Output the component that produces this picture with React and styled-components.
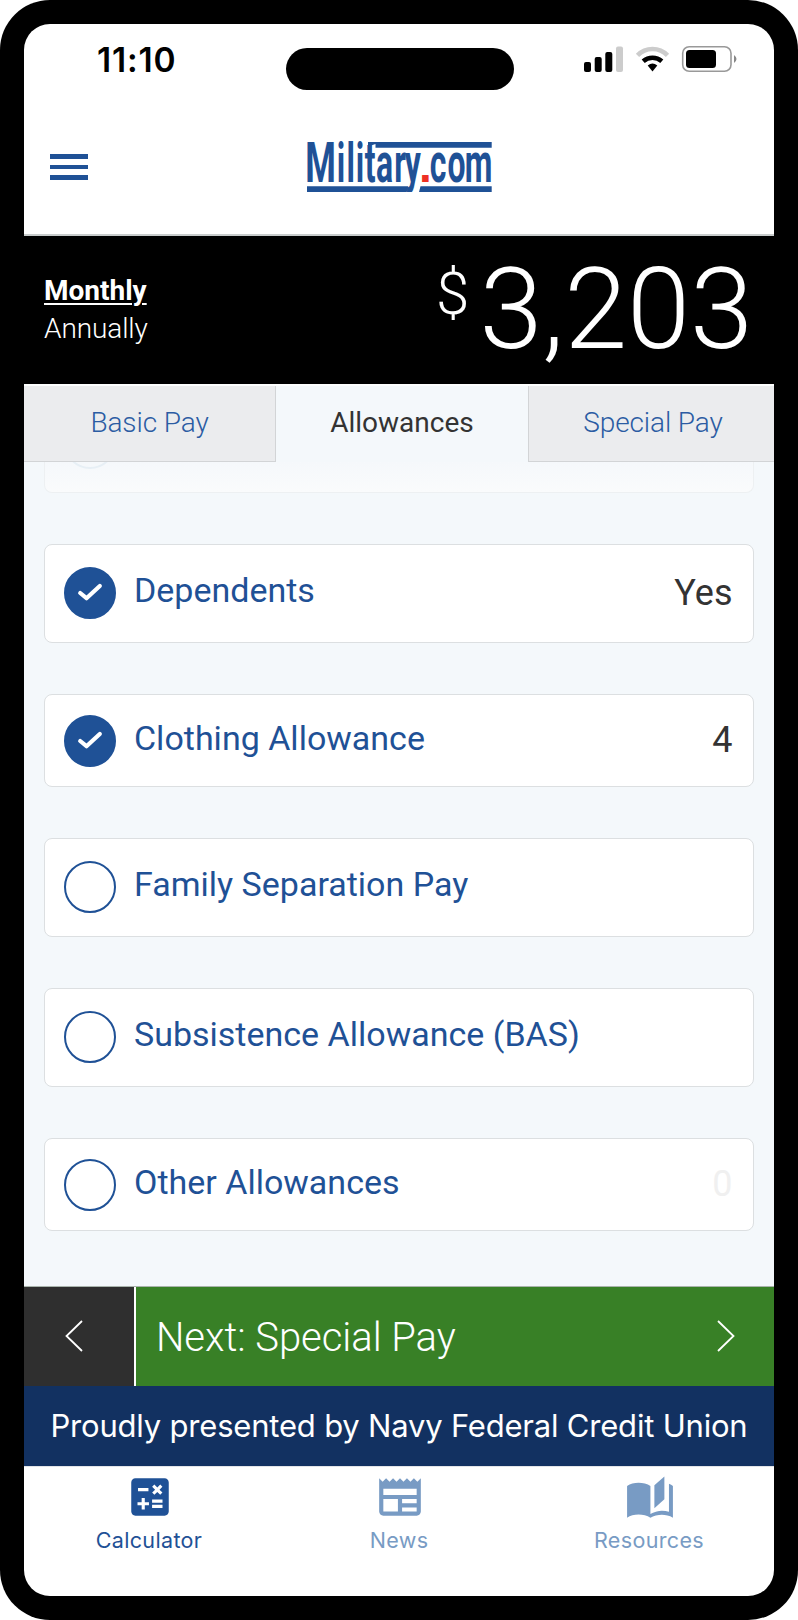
import styled, { createGlobalStyle } from 'styled-components'

const GlobalStyle = createGlobalStyle`
    * {
        box-sizing:border-box;
    }

    body {
        margin:0;
        background:white;
        font-family:Roboto,sans-serif;
    }

    button {
        margin:0;
        padding:0;
        border:0;
        background:none;
        font:inherit;
        text-align:left;
        white-space:nowrap;
    }
`

const Phone = styled.main`
    width:798px;
    height:1620px;
    padding:24px;
    border-radius:50px;
    background:black;
`

const Screen = styled.div`
    display:flex;
    flex-direction:column;
    height:100%;
    border-radius:26px;
    overflow:hidden;
    background:white;
`

const StatusBar = styled.div`
    display:grid;
    grid-template-columns:262px 228px 1fr;
    height:88px;
    padding-top:17px;
    align-items:start;
`

const Clock = styled.span`
    padding:1px 0 0 73px;
    font:600 33.5px/36px Inter,sans-serif;
    letter-spacing:.8px;
`

const Island = styled.div`
    height:42px;
    margin-top:7px;
    border-radius:21px;
    background:black;
`

const StatusIcons = styled.svg`
    width:156px;
    height:30px;
    margin:4px 0 0 69px;
`

const Header = styled.header`
    display:grid;
    grid-template-columns:1fr 190px 1fr;
    height:124px;
    border-bottom:2px solid #c8cccc;
    align-items:start;
`

const MenuButton = styled.button`
    display:flex;
    flex-direction:column;
    gap:6px;
    width:38px;
    margin:42px 0 0 26px;

    span {
        height:4.6px;
        background:#1f5196;
    }
`

const Logo = styled.svg`
    width:190px;
    height:60px;
    margin-top:26px;
    overflow:visible;
    fill:#1f5196;

    text {
        font-family:Roboto,sans-serif;
        font-size:56px;
        font-weight:700;
    }

    .dot {
        fill:#ee3124;
        font-family:'Liberation Sans',sans-serif;
        font-size:46px;
    }
`

const Summary = styled.section`
    display:flex;
    justify-content:space-between;
    height:148px;
    padding:0 21px 0 20px;
    background:black;
    color:white;
`

const Periods = styled.div`
    display:flex;
    flex-direction:column;
    padding-top:36px;
`

const Period = styled.button`
    height:38px;
    color:white;
    font-size:28px;
    line-height:38px;
    font-weight:${({ $active }) => $active ? 700 : 300};
    letter-spacing:${({ $active }) => $active ? 0 : '-.1px'};
    text-decoration:${({ $active }) => $active ? 'underline' : 'none'};
    text-decoration-thickness:2px;
    text-underline-offset:3px;
`

const Amount = styled.div`
    display:flex;
    gap:10px;
    font-weight:300;
    font-size:113.5px;
    line-height:148px;

    sup {
        padding-top:26px;
        font-size:60px;
        line-height:64px;
        vertical-align:baseline;
    }
`

const Tabs = styled.nav`
    display:grid;
    grid-template-columns:252px 252px 246px;
    height:78px;
    border-top:2px solid #fdfefe;
`

const Tab = styled.button`
    padding-bottom:${({ $active }) => $active ? 4 : 2}px;
    padding-left:${({ $edge }) => $edge === 'left' ? 3 : 0}px;
    border:0 solid #d2d4d6;
    border-width:${({ $active }) => $active ? 0 : '0 0 1px'};
    border-right-width:${({ $edge }) => $edge === 'right' ? '1px' : 0};
    border-left-width:${({ $edge }) => $edge === 'left' ? '1px' : 0};
    background:${({ $active }) => $active ? '#f4f8fb' : '#ebecee'};
    color:${({ $active }) => $active ? '#333' : '#2b5ca3'};
    font-size:28px;
    font-weight:${({ $active }) => $active ? 400 : 300};
    letter-spacing:${({ $active }) => $active ? 0 : '-.1px'};
    text-align:center;
`

const List = styled.section`
    flex:1;
    display:flex;
    flex-direction:column;
    gap:50.5px;
    padding:0 20px;
    background:#f4f8fb;
    overflow:hidden;
`

const FadedCard = styled.div`
    display:flex;
    align-items:flex-end;
    flex:none;
    height:31.3px;
    padding:0 0 23px 19px;
    border:1px solid #edf0f2;
    border-top:0;
    border-radius:0 0 8px 8px;
    background:linear-gradient(#f5f8fb,#fafbfc);
    overflow:hidden;

    span {
        flex:none;
        width:52px;
        height:52px;
        border:2px solid #e7eff5;
        border-radius:50%;
    }
`

const Card = styled.div`
    display:flex;
    align-items:flex-start;
    flex:none;
    height:${({ $tall }) => $tall ? 99.4 : 93.7}px;
    padding:${({ $tall }) => $tall ? 22.5 : 20}px 20.5px 0 19.2px;
    border:1px solid #dcdfe1;
    border-radius:8px;
    background:white;
    color:#1f5196;
    font-size:34px;
    line-height:46.6px;
`

const Check = styled.span`
    display:flex;
    align-items:center;
    justify-content:center;
    flex:none;
    width:52px;
    height:52px;
    margin-right:17.8px;
    border:2px solid #1f5196;
    border-radius:50%;
    background:${({ $checked }) => $checked ? '#1f5196' : 'white'};

    svg {
        margin-bottom:2px;
    }
`

const Value = styled.span`
    margin-left:auto;
    padding-top:2.6px;
    color:${({ $empty }) => $empty ? '#f0f0f0' : '#333'};
    font-size:36px;
`

const Actions = styled.div`
    display:flex;
    gap:2px;
    height:100px;
    border-top:1px solid #a9b4ac;
`

const Back = styled.button`
    display:flex;
    align-items:center;
    justify-content:center;
    width:110px;
    padding:0 10px 2px 0;
    background:#2f2f2f;
`

const Next = styled.button`
    flex:1;
    display:flex;
    align-items:center;
    justify-content:space-between;
    padding:0 38px 0 20px;
    background:#388026;
    color:white;
    font-size:40px;
    font-weight:300;
    line-height:48px;
    letter-spacing:-.05px;

    span {
        padding-top:2px;
    }

    svg {
        margin-bottom:2px;
    }
`

const Chevron = styled.svg`
    width:20px;
    height:34px;
    fill:none;
    stroke:white;
    stroke-width:1.8;
    transform:${({ $flip }) => $flip ? 'scaleX(-1)' : 'none'};
`

const Sponsor = styled.div`
    height:80px;
    background:#123161;
    color:white;
    font:400 31px/80px Inter,sans-serif;
    letter-spacing:-.2px;
    text-align:center;
    white-space:nowrap;
`

const BottomNav = styled.nav`
    display:grid;
    grid-template-columns:repeat(3,1fr);
    height:130px;
    border-top:1px solid #e2e4e8;
`

const NavItem = styled.button`
    display:flex;
    flex-direction:column;
    align-items:center;
    padding-top:5px;
    color:${({ $active }) => $active ? '#1f5196' : '#789bc4'};
    font:400 21.5px/28px Inter,sans-serif;
    letter-spacing:.35px;

    svg {
        width:50px;
        height:50px;
        margin:0 0 4px 1px;
        fill:currentColor;
    }
`

const allowances = [
    { label: 'Dependents', value: 'Yes', checked: true, tall: true },
    { label: 'Clothing Allowance', value: '4', checked: true },
    { label: 'Family Separation Pay', tall: true },
    { label: 'Subsistence Allowance (BAS)', tall: true },
    { label: 'Other Allowances', value: '0', empty: true },
]

function CheckMark() {
    return (
        <svg width='26' height='20' viewBox='0 0 26 20' fill='none' stroke='white' strokeWidth='4.2' strokeLinecap='round' strokeLinejoin='round'>
            <path d='M3.200 11 9.500 16.200 22.800 4' />
        </svg>
    )
}

function ChevronIcon({ flip }) {
    return (
        <Chevron $flip={flip} viewBox='0 0 20 34'>
            <path d='M2 2 17.500 17 2 32' />
        </Chevron>
    )
}

function Status() {
    return (
        <StatusBar>
            <Clock>11:10</Clock>
            <Island />
            <StatusIcons viewBox='0 0 156 30'>
                <rect x='1' y='17' width='7' height='10' rx='2' />
                <rect x='11.7' y='12' width='7' height='15' rx='2' />
                <rect x='22.3' y='7' width='7' height='20' rx='2' />
                <rect x='33' y='1.5' width='7' height='25.5' rx='2' fill='#ccc' />
                <path d='M54.500 10.300a21 21 0 0 1 30 0' fill='none' stroke='#ccc' strokeWidth='4.6' />
                <path d='M60.200 16.300a14 14 0 0 1 18.600 0' fill='none' stroke='black' strokeWidth='4.6' />
                <path d='M64.700 20.500q4.800-4 9.600 0L69.500 26.500Z' />
                <rect x='99.7' y='1.7' width='48.3' height='24.6' rx='6.5' fill='none' stroke='#999' strokeWidth='1.6' />
                <rect x='103' y='5' width='30' height='18' rx='3.5' />
                <path d='M151 10q5 4 0 8Z' fill='#888' />
            </StatusIcons>
        </StatusBar>
    )
}

// letters are squeezed horizontally, so each x is its place divided by the scale
const squeeze = 0.57
const at = (...places) => places.map((x) => x / squeeze).join(' ')

function MilitaryLogo() {
    return (
        <Logo viewBox='0 0 190 60' role='img' aria-label='Military.com'>
            <path d='M64 4H187.700V9.700H71.500V6L64 8.500Z' />
            <path d='M3 48.300H104.300L102.700 54H3ZM116.500 48.300H187.700V54H115Z' />
            <g transform={`scale(${squeeze} 1)`}>
                <text y='44'>
                    <tspan x={at(1.2)} textLength={at(30.6)} lengthAdjust='spacingAndGlyphs'>M</tspan>
                    <tspan x={at(32.8, 42.5, 51.8, 60.8, 72, 90.3, 100.8)}>ilitary</tspan>
                </text>
                <text x={at(125.8, 143.4, 160.8)} y='44'>com</text>
            </g>
            <text className='dot' x='115' y='44'>.</text>
            <path d='M98 54H118V58H98Z' fill='white' />
        </Logo>
    )
}

export default function App() {
    return (
        <>
            <GlobalStyle />
            <Phone>
                <Screen>
                    <Status />
                    <Header>
                        <MenuButton aria-label='Menu'>
                            <span />
                            <span />
                            <span />
                        </MenuButton>
                        <MilitaryLogo />
                    </Header>

                    <Summary>
                        <Periods>
                            <Period $active>Monthly</Period>
                            <Period>Annually</Period>
                        </Periods>
                        <Amount><sup>$</sup>3,203</Amount>
                    </Summary>

                    <Tabs>
                        <Tab $edge='right'>Basic Pay</Tab>
                        <Tab $active>Allowances</Tab>
                        <Tab $edge='left'>Special Pay</Tab>
                    </Tabs>

                    <List>
                        <FadedCard><span /></FadedCard>
                        {allowances.map(({ label, value, checked, tall, empty }) => (
                            <Card key={label} $tall={tall}>
                                <Check $checked={checked}>{checked && <CheckMark />}</Check>
                                {label}
                                {value && <Value $empty={empty}>{value}</Value>}
                            </Card>
                        ))}
                    </List>

                    <Actions>
                        <Back aria-label='Back'><ChevronIcon flip /></Back>
                        <Next><span>Next: Special Pay</span><ChevronIcon /></Next>
                    </Actions>
                    <Sponsor>Proudly presented by Navy Federal Credit Union</Sponsor>

                    <BottomNav>
                        <NavItem $active>
                            <svg viewBox='0 0 24 24'>
                                <path d='M19 3H5c-1.100 0-2 .900-2 2v14c0 1.100.900 2 2 2h14c1.100 0 2-.900 2-2V5c0-1.100-.900-2-2-2zm-5.970 4.060L14.090 6l1.410 1.410L16.910 6l1.060 1.060-1.410 1.410 1.410 1.410-1.060 1.060-1.410-1.400-1.410 1.410-1.060-1.060 1.410-1.410-1.410-1.420zm-6.780.660h5v1.500h-5v-1.500zM11.500 16h-2v2H8v-2H6v-1.500h2v-2h1.500v2h2V16zm6.500 1.250h-5v-1.500h5v1.500zm0-2.500h-5v-1.500h5v1.500z' />
                            </svg>
                            Calculator
                        </NavItem>
                        <NavItem>
                            <svg viewBox='0 0 24 24'>
                                <path d='M22 3l-1.670 1.670L18.670 3 17 4.670 15.330 3l-1.660 1.670L12 3l-1.670 1.670L8.670 3 7 4.670 5.330 3 3.670 4.670 2 3v16c0 1.100.900 2 2 2h16c1.100 0 2-.900 2-2V3zM11 19H4v-6h7v6zm9 0h-7v-2h7v2zm0-4h-7v-2h7v2zm0-4H4V8h16v3z' />
                            </svg>
                            News
                        </NavItem>
                        <NavItem>
                            <svg viewBox='0 0 24 24'>
                                <path d='M18.900 2.200 14.100 6.400V17.400L18.900 13.100Z' />
                                <path d='M1 6.700C2.450 5.600 4.550 5.100 6.500 5.100S10.800 5.600 12.200 6.700V20.200C13.700 19.300 16 18.600 17.700 18.600c1.200 0 2.300.150 3.400.500V5.600c.750.250 1.400.600 1.900 1.100V21.900C21.400 20.900 19.400 20.500 17.700 20.500c-1.700 0-4.100.600-5.500 1.500C10.700 20.900 8.500 20.400 6.500 20.400S2.400 20.900 1 21.900Z' />
                            </svg>
                            Resources
                        </NavItem>
                    </BottomNav>
                </Screen>
            </Phone>
        </>
    )
}
